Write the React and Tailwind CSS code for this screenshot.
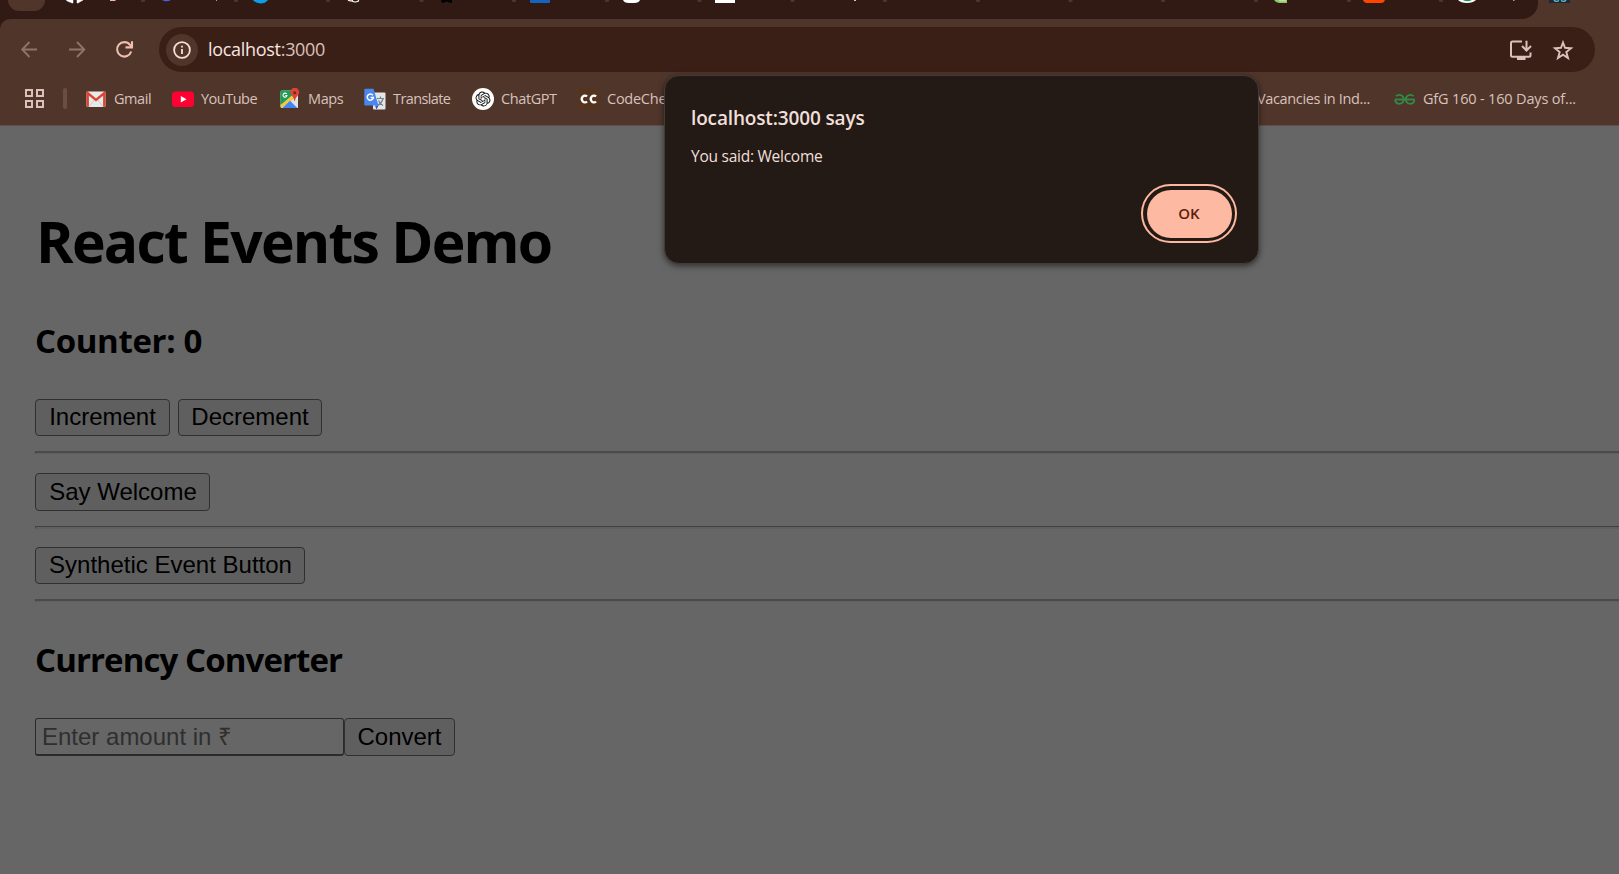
const UI = "font-['Open_Sans','Noto_Sans',sans-serif]";

/* Lower edges of the open tabs: favicons and the separators between them. */
function TabStrip() {
  const separators = [141, 234, 326, 419.5, 512, 605, 697.5, 790.5, 883, 976, 1068.5, 1161, 1254, 1347, 1439];
  return (
    <svg className="block h-[19px] w-full" viewBox="0 0 1619 19">
      <rect width="1619" height="19" fill="#50352b" />
      <path d="M0 0H1538V3A16 16 0 0 1 1522 19H0Z" fill="#301a13" />
      <path d="M8 0H45A11 11 0 0 1 34 11H19A11 11 0 0 1 8 0Z" fill="#50352b" />
      {separators.map((x) => (
        <rect key={x} x={x} y="-2" width="4" height="4" rx="1" fill="#50352b" />
      ))}
      <path d="M66 0L72 3H73V0ZM77 0V3H78L83 0ZM67 1L70 2" fill="#fff" stroke="#fff" strokeWidth=".5" />
      <rect x="110" y="0" width="5.5" height="1" fill="#f4b8a4" />
      <path d="M162 0H171Q166.500 2.500 162 0Z" fill="#4461f2" />
      <rect x="216" y="0" width="1" height="1" fill="#b09c95" />
      <path d="M253 0H268Q265 3.500 260.500 3.500T253 0Z" fill="#0aa0e8" />
      <path d="M348 0Q350 1.500 353 .5M352 1Q355 3 358.500 1V0" fill="none" stroke="#fff" strokeWidth="1.2" />
      <path d="M441 0H452V3L449 2.500L446.500 1.500L444 2.500L442 3Z" fill="#000" />
      <path d="M530 0H550V2Q550 3 549 3H531Q530 3 530 2Z" fill="#1565c0" />
      <path d="M623 0H640Q639 3 634 3H629Q624 3 623 0Z" fill="#fff" />
      <rect x="715" y="0" width="20" height="3" fill="#fff" />
      <rect x="854" y="0" width="2" height="1" fill="#d8c2bb" />
      <path d="M1274 0H1287V3H1279Q1276 3 1274 0Z" fill="#8bc766" />
      <path d="M1278 0H1286V1.500H1280Z" fill="#b8e29c" />
      <path d="M1363 0H1385Q1384 3 1381 3H1367Q1364 3 1363 0Z" fill="#ff4500" />
      <path d="M1458 0H1476Q1473 3 1467 3T1458 0Z" fill="#fff" />
      <path d="M1463 0H1472Q1467 2.500 1463 0Z" fill="#0f9d58" />
      <rect x="1513" y="0" width="1.500" height="1" fill="#b09c95" />
      <rect x="1549" y="0" width="21" height="3" fill="#23272f" />
      <path d="M1554 0Q1556 2.500 1559 .5M1561 .5Q1564 2.500 1566 0" fill="none" stroke="#58c4dc" strokeWidth="1.400" />
    </svg>
  );
}

function Toolbar() {
  return (
    <div className="flex h-[61px] bg-[#301a13]">
      <div className="flex w-full rounded-tl-[10px] bg-[#50352b] pt-2 pl-[18px]">
        <svg className="mt-[10px] h-6 w-6" viewBox="0 0 24 24" fill="none" stroke="#8f736a" strokeWidth="1.900">
          <path d="M19 12.500H4.500M11.500 5L4.200 12.500L11.500 20" />
        </svg>
        <svg className="mt-[10px] ml-6 h-6 w-6" viewBox="0 0 24 24" fill="none" stroke="#8f736a" strokeWidth="1.900">
          <path d="M3 12.500H18.500M11 5L18.300 12.500L11 20" />
        </svg>
        <svg className="mt-[10px] ml-[22px] h-6 w-6" viewBox="0 0 24 24" fill="none" stroke="#efbfae" strokeWidth="2.100">
          <path d="M19.200 14.500A7.200 7.200 0 1 1 18 7.900L19.500 9.800" />
          <path d="M20 4.300V10.400H13.500" />
        </svg>
        <div className="ml-[23px] flex h-[45px] w-[1436px] items-center rounded-full bg-[#3a1f17] pl-[7px]">
          <div className="flex h-8 w-8 shrink-0 items-center justify-center rounded-full bg-[#50352b]">
            <svg className="h-[18px] w-[18px]" viewBox="0 0 18 18" fill="none" stroke="#f6dfd8" strokeWidth="1.800">
              <circle cx="9" cy="9" r="7.900" />
              <path d="M9 8V13M9 4.800V6.600" />
            </svg>
          </div>
          <span className={`ml-[10px] pb-[2px] ${UI} text-[18px] leading-6 tracking-[-0.3px] text-[#d8c2bb]`}>
            <span className="text-[#f6e6e0]">localhost</span>:3000
          </span>
          <div className="ml-auto flex items-center pr-[20px]">
            <svg className="h-6 w-6" viewBox="0 0 24 24" fill="none" stroke="#d8c2bb" strokeWidth="2">
              <path d="M13 3.500H3.500Q2 3.500 2 5V17.200Q2 18.700 3.500 18.700H20Q21.500 18.700 21.500 17.200V14.500" />
              <path d="M17.500 2.800V12M13 8L17.500 12.500L22 8" />
              <path d="M8 20.500H16.500" strokeWidth="3" />
            </svg>
            <svg className="ml-[18px] h-6 w-6" viewBox="0 0 24 24" fill="none" stroke="#d8c2bb" strokeWidth="1.900">
              <path d="M12 4.500L14 9.800L20 10.200L15.300 14L17 20L12 16.600L7 20L8.700 14L4 10.200L10 9.800Z" />
            </svg>
          </div>
        </div>
      </div>
    </div>
  );
}

function GmailIcon() {
  return (
    <svg className="h-[22px] w-[22px]" viewBox="0 0 22 22">
      <rect x="1.500" y="3.500" width="19" height="15.500" rx="1.500" fill="#e9e9e9" />
      <path d="M4 19L10 11M18 19L12 11" stroke="#cfcfcf" strokeWidth="1" />
      <path d="M2.700 18.800V5L11 12L19.300 5V18.800" fill="none" stroke="#db4437" strokeWidth="2.400" />
    </svg>
  );
}
function YouTubeIcon() {
  return (
    <svg className="h-[22px] w-[22px]" viewBox="0 0 22 22">
      <rect x="0" y="3.500" width="22" height="15.500" rx="3.500" fill="#ff0033" />
      <path d="M8.800 8V14.500L14.500 11.200Z" fill="#fff" />
    </svg>
  );
}
function MapsIcon() {
  return (
    <svg className="h-[22px] w-[22px]" viewBox="0 0 22 22">
      <path d="M3 2.500H19V20H3Q1.500 20 1.500 18.500V4Q1.500 2.500 3 2.500Z" fill="#dfe3e6" />
      <path d="M3 2.500H15L13 9L1.500 19V4Q1.500 2.500 3 2.500Z" fill="#1f9d58" />
      <path d="M1.500 16L15.500 4L18 9L10.500 14L3.500 20L1.500 18.500Z" fill="#f6c945" />
      <path d="M1.500 13.500L12 4L13.500 7L1.500 17Z" fill="#1f9d58" />
      <path d="M3.500 20L11 12.800L18.300 20Z" fill="#4285f4" />
      <path d="M7.700 6A2 2 0 1 0 8 7.500H6.300" fill="none" stroke="#fff" strokeWidth="1.100" />
      <path d="M15.600 13.500Q15.100 10 13 7.800A4.500 4.500 0 1 1 18.500 7.800Q16.300 10 15.600 13.500Z" fill="#db4437" />
      <circle cx="15.700" cy="4.800" r="1.500" fill="#7b231c" />
    </svg>
  );
}
function TranslateIcon() {
  return (
    <svg className="h-[22px] w-[22px]" viewBox="0 0 22 22">
      <rect x="9" y="4.500" width="12.500" height="17" rx="1" fill="#e4e6e8" />
      <path d="M13 10.500H20M16.500 8.500V10.500M19 11Q17.500 15.500 13.500 17.500M14.500 12.500Q16 16 19 17.500" fill="none" stroke="#6f8390" strokeWidth="1.200" />
      <path d="M11 17.500L14.500 17.500L12.500 21.500Z" fill="#3050c0" />
      <path d="M1.500 .8H9.500L14.500 17.500H1.500Q.3 17.500 .3 16.300V2Q.3 .8 1.500 .8Z" fill="#4a86f0" />
      <path d="M8.800 7.200A3.100 3.100 0 1 0 9.400 9.400H6.600" fill="none" stroke="#fff" strokeWidth="1.500" />
    </svg>
  );
}
function ChatGPTIcon() {
  return (
    <svg className="h-[22px] w-[22px]" viewBox="0 0 22 22">
      <circle cx="11" cy="11" r="11" fill="#fff" />
      <g transform="translate(3.500 3.500) scale(.625)" fill="#111">
        <path d="M22.282 9.821a5.985 5.985 0 0 0-.516-4.910 6.046 6.046 0 0 0-6.510-2.900A6.065 6.065 0 0 0 4.981 4.182a5.985 5.985 0 0 0-3.998 2.900 6.046 6.046 0 0 0 .743 7.097 5.980 5.980 0 0 0 .510 4.911 6.051 6.051 0 0 0 6.515 2.900A5.985 5.985 0 0 0 13.260 24a6.056 6.056 0 0 0 5.772-4.206 5.990 5.990 0 0 0 3.998-2.900 6.056 6.056 0 0 0-.747-7.073zM13.260 22.430a4.476 4.476 0 0 1-2.876-1.041l.142-.080 4.778-2.758a.795.795 0 0 0 .393-.681v-6.737l2.020 1.169a.071.071 0 0 1 .038.052v5.583a4.504 4.504 0 0 1-4.495 4.493zM3.600 18.304a4.471 4.471 0 0 1-.535-3.014l.142.085 4.783 2.759a.771.771 0 0 0 .780 0l5.843-3.369v2.332a.080.080 0 0 1-.033.062L9.740 19.950a4.499 4.499 0 0 1-6.140-1.646zM2.341 7.896a4.485 4.485 0 0 1 2.365-1.973V11.600a.766.766 0 0 0 .388.677l5.815 3.354-2.020 1.169a.076.076 0 0 1-.071 0l-4.830-2.787A4.504 4.504 0 0 1 2.341 7.872zm16.596 3.856l-5.833-3.387L15.119 7.200a.076.076 0 0 1 .071 0l4.830 2.791a4.494 4.494 0 0 1-.676 8.105v-5.678a.790.790 0 0 0-.407-.667zm2.011-3.024l-.142-.085-4.774-2.782a.776.776 0 0 0-.785 0L9.409 9.230V6.897a.066.066 0 0 1 .028-.061l4.830-2.787a4.499 4.499 0 0 1 6.680 4.660zM8.307 12.863l-2.020-1.164a.080.080 0 0 1-.038-.057V6.074a4.499 4.499 0 0 1 7.376-3.454l-.142.081-4.778 2.758a.795.795 0 0 0-.393.682zm1.097-2.366l2.602-1.500 2.607 1.500v2.999l-2.597 1.500-2.607-1.500z" />
      </g>
    </svg>
  );
}
function CodeChefIcon() {
  return (
    <svg className="h-[22px] w-[22px]" viewBox="0 0 22 22">
      <rect width="22" height="22" fill="#55341f" />
      <path d="M9 8.600A3 3.400 0 1 0 9 13.400M18 8.600A3 3.400 0 1 0 18 13.400" fill="none" stroke="#fff" strokeWidth="2.300" />
    </svg>
  );
}
function GfgIcon() {
  return (
    <svg className="h-[22px] w-[22px]" viewBox="0 0 22 22" fill="none" stroke="#2f8d46" strokeWidth="1.800">
      <path d="M1 11.500H20.500" />
      <path d="M2 8.200A4.500 4.500 0 1 1 1.900 14.400Q1.200 13.200 1.200 11.500" />
      <path d="M19.500 8.200A4.500 4.500 0 1 0 19.600 14.400Q20.300 13.200 20.300 11.500" />
    </svg>
  );
}

function Bookmark({ icon, label, track, className = "" }) {
  return (
    <div className={`flex shrink-0 items-center gap-[7px] ${className}`}>
      {icon}
      <span className={`${UI} text-[14.5px] leading-5 whitespace-nowrap text-[#d8c2bb] ${track}`}>{label}</span>
    </div>
  );
}

function BookmarksBar() {
  return (
    <div className="flex h-[46px] items-center overflow-hidden border-b border-[#5c504b] bg-[#50352b] pb-[8px] pl-[25px]">
      <svg className="h-[19px] w-[19px] shrink-0" viewBox="0 0 19 19" fill="none" stroke="#d8c2bb" strokeWidth="2">
        <path d="M1 1H7V7H1ZM12 1H18V7H12ZM1 12H7V18H1ZM12 12H18V18H12Z" />
      </svg>
      <span className="ml-[19px] h-[21px] w-[4px] shrink-0 rounded-full bg-[#6d4d42]" />
      <Bookmark className="ml-[18px] w-[87px]" icon={<GmailIcon />} label="Gmail" track="tracking-[-0.45px]" />
      <Bookmark className="w-[107px]" icon={<YouTubeIcon />} label="YouTube" track="tracking-[-0.5px]" />
      <Bookmark className="w-[85px]" icon={<MapsIcon />} label="Maps" track="tracking-[-0.4px]" />
      <Bookmark className="w-[108px]" icon={<TranslateIcon />} label="Translate" track="tracking-[-0.6px]" />
      <Bookmark className="w-[106px]" icon={<ChatGPTIcon />} label="ChatGPT" track="tracking-[-0.4px]" />
      <Bookmark className="w-[679px]" icon={<CodeChefIcon />} label="CodeChef" track="tracking-[-0.25px]" />
      <Bookmark className="w-[137px]" icon={null} label="Vacancies in Ind..." track="tracking-[-0.35px]" />
      <Bookmark icon={<GfgIcon />} label="GfG 160 - 160 Days of..." track="tracking-[-0.17px]" />
    </div>
  );
}

const BUTTON =
  "flex shrink-0 items-center justify-center rounded-[4px] border-[1.500px] border-[#303030] bg-[#5f5f5f] font-['Liberation_Sans',sans-serif] text-[24px] leading-7 text-black";

function Rule({ className, thin = false }) {
  return (
    <div
      className={`h-[3px] w-full shrink-0 border-b border-l border-b-[#606060] border-l-[#444] ${
        thin ? "border-t border-t-[#404040] bg-[#606060]" : "border-t-2 border-t-[#4a4a4a]"
      } ${className}`}
    />
  );
}

function Page() {
  return (
    <main className="flex flex-1 flex-col overflow-hidden bg-[#666] pl-[35px] text-black">
      <h1 className={`mt-[76px] ml-px h-[78px] w-max ${UI} text-[57px] leading-[78px] font-bold tracking-[-1.75px]`}>React Events Demo</h1>
      <h3 className={`mt-[38px] h-[46px] w-max ${UI} text-[33px] leading-[46px] font-bold tracking-[-0.35px]`}>Counter: 0</h3>
      <div className="mt-[35px] flex gap-[8px]">
        <button className={`${BUTTON} h-[37px] w-[135px] pb-px`}>Increment</button>
        <button className={`${BUTTON} h-[37px] w-[144px] pb-px`}>Decrement</button>
      </div>
      <Rule className="mt-[15px]" />
      <button className={`${BUTTON} mt-[19px] h-[38px] w-[175px] pb-px pl-px`}>Say Welcome</button>
      <Rule className="mt-[15px]" thin />
      <button className={`${BUTTON} mt-[18px] h-[37px] w-[270px] pb-px pl-px`}>Synthetic Event Button</button>
      <Rule className="mt-[15px]" />
      <h3 className={`mt-[35px] h-[46px] w-max ${UI} text-[33px] leading-[46px] font-bold tracking-[-0.9px]`}>Currency Converter</h3>
      <div className="mt-[35px] flex">
        <input
          className="h-[38px] w-[309px] rounded-[3px] border-[1.500px] border-b-2 border-[#2b2b2b] bg-[#666] px-[6px] font-['Liberation_Sans',sans-serif] text-[24px] placeholder:text-[#2f2f2f]"
          placeholder="Enter amount in ₹"
        />
        <button className={`${BUTTON} h-[38px] w-[111px]`}>Convert</button>
      </div>
    </main>
  );
}

function Alert() {
  return (
    <div className={`absolute top-[75px] left-[664px] flex h-[189px] w-[595px] flex-col rounded-[15px] border border-[#403d39] bg-[#231a16] pt-[28px] pr-[21px] pl-[26px] text-[#f1dfd9] shadow-[0_2px_6px_rgba(0,0,0,0.55)] ${UI}`}>
      <h2 className="w-max text-[19px] leading-7 font-semibold tracking-[-0.15px]">localhost:3000 says</h2>
      <p className="mt-[12px] w-max text-[15.5px] leading-6 tracking-[-0.25px]">You said: Welcome</p>
      <button className="mt-[16px] flex h-[59px] w-[96px] items-center justify-center self-end rounded-full border-2 border-[#ffb8a0]">
        <span className="flex h-[48px] w-[85px] items-center justify-center rounded-full bg-[#fdb9a2] text-[15px] font-semibold text-[#5c1f0a]">OK</span>
      </button>
    </div>
  );
}

export default function App() {
  return (
    <div className="relative flex h-[874px] w-full flex-col overflow-hidden">
      <TabStrip />
      <Toolbar />
      <BookmarksBar />
      <Page />
      <Alert />
    </div>
  );
}
